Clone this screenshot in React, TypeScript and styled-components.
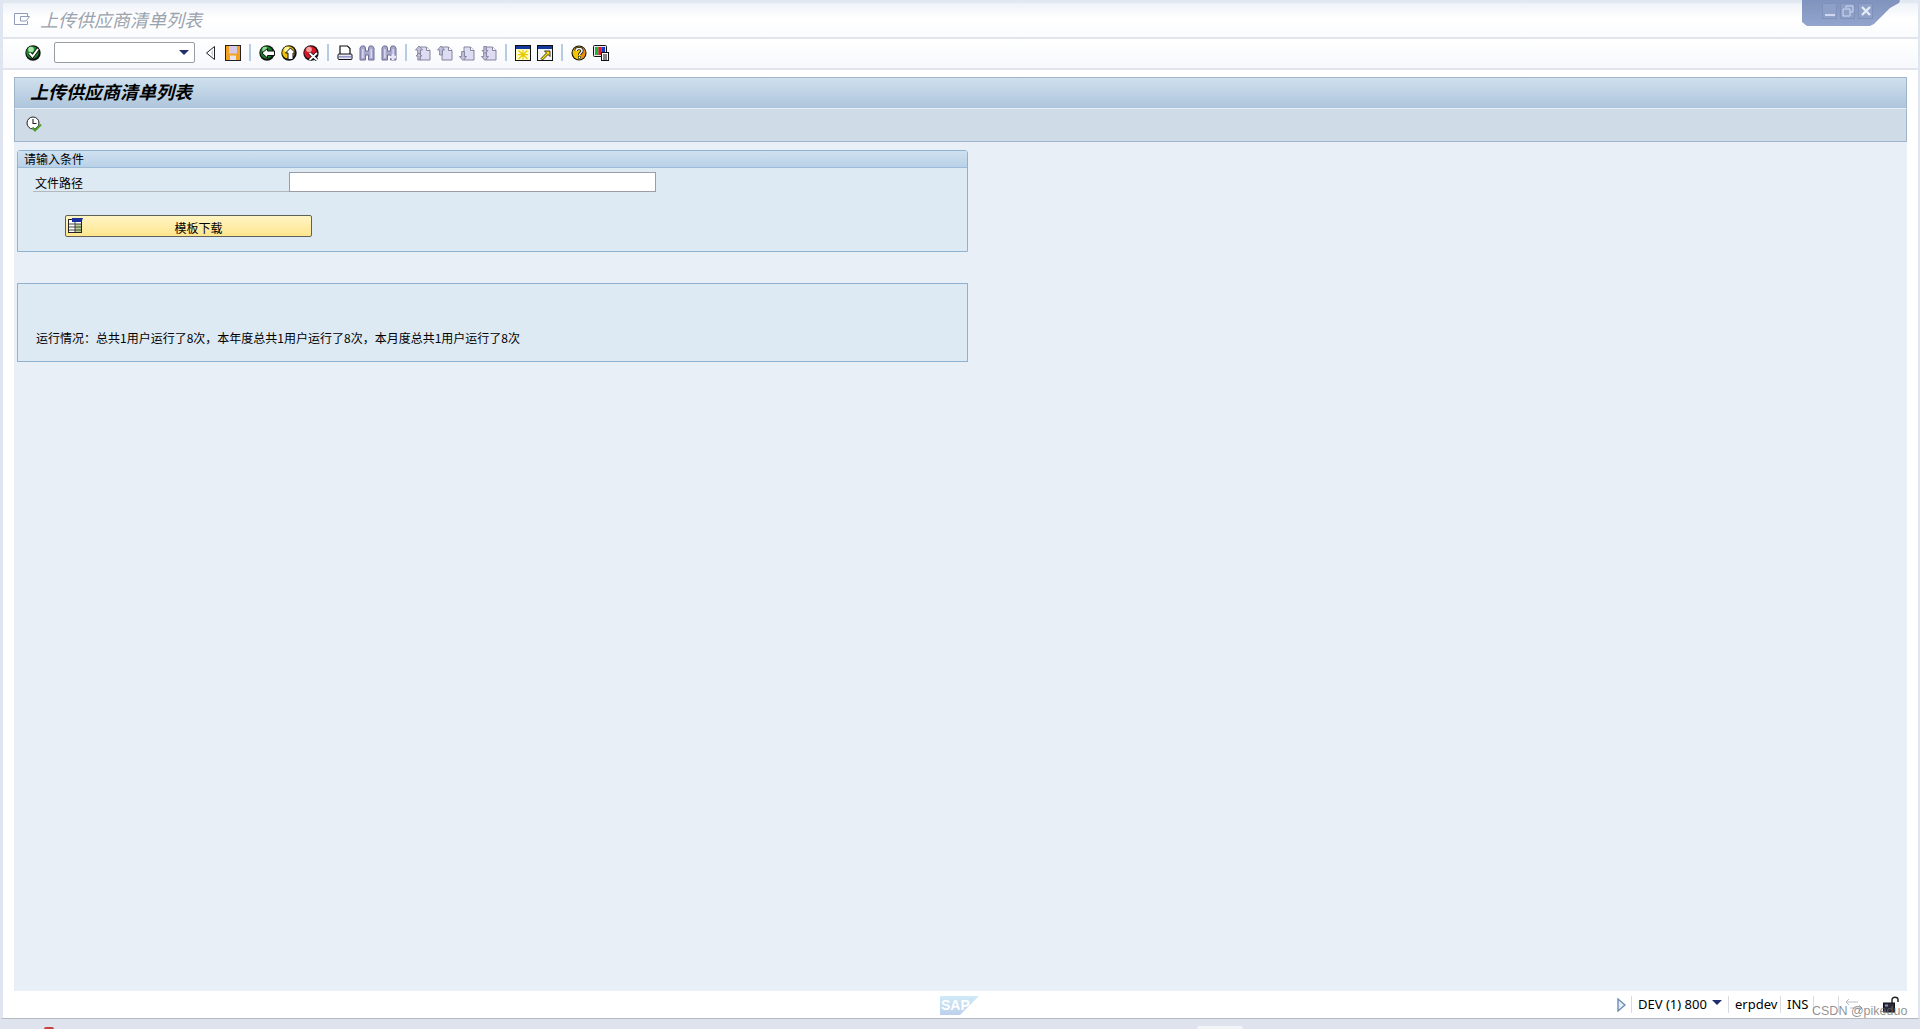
import React from "react";
import styled, { createGlobalStyle } from "styled-components";

const GlobalStyle = createGlobalStyle`
  html, body {
    margin: 0;
    padding: 0;
    height: 100%;
    overflow: hidden;
    background: #ffffff;
    font-family: "Noto Sans CJK SC", "Liberation Sans", sans-serif;
    font-size: 12px;
    color: #000;
  }
`;

// 아이콘
const Svg = styled.svg`
  display: block;
  width: 16px;
  height: 16px;
`;

const Ball: React.FC<{ dark: string; light: string; children?: React.ReactNode }> = ({ dark, light, children }) => (
  <Svg viewBox="0 0 16 16">
    <circle cx="8" cy="8" r="7.7" fill="#111" />
    <circle cx="7.5" cy="7.5" r="6.2" fill={dark} />
    <circle cx="6" cy="4.5" r="2.8" fill={light} />
    {children}
  </Svg>
);

const CheckIcon = () => (
  <Ball dark="#1d8a2e" light="#a8e6a8">
    <path d="M4.5 8 L7.5 11.5 L13 4" fill="none" stroke="#111" strokeWidth="3.6" />
    <path d="M4.5 8 L7.5 11.5 L13 4" fill="none" stroke="#fff" strokeWidth="2" />
  </Ball>
);
const BackIcon = () => (
  <Ball dark="#157a28" light="#8fdc8f">
    <path d="M3 8 L8.5 3.5 V6 H15.5 V10.5 H8.5 V13 Z" fill="#fff" stroke="#111" strokeWidth="1" />
  </Ball>
);
const UpIcon = () => (
  <Ball dark="#f2c200" light="#fff6a0">
    <path d="M9.5 3 L14.5 8 H12 V14.5 H7 V8 H4.5 Z" fill="#fff" stroke="#111" strokeWidth="1" />
  </Ball>
);
const CancelIcon = () => (
  <Ball dark="#d8182a" light="#f7a0a0">
    <path d="M6.5 8 L14 15 M14 8 L6.5 15" stroke="#111" strokeWidth="3.4" />
    <path d="M6.5 8 L14 15 M14 8 L6.5 15" stroke="#fff" strokeWidth="1.8" />
  </Ball>
);
const TriangleIcon = () => (
  <Svg viewBox="0 0 16 16">
    <path d="M11.5 1.5 V14.5 L3.5 8 Z" fill="#fff" stroke="#222" strokeWidth="1" />
    <path d="M10 4 V12 L8 8 Z" fill="#c8d0dc" />
  </Svg>
);
const SaveIcon = () => (
  <Svg viewBox="0 0 16 16">
    <rect x="0.5" y="0.5" width="15" height="15" fill="#f2a21e" stroke="#222" />
    <rect x="4" y="1" width="8" height="7.5" fill="#d8c8e8" />
    <rect x="5" y="10.5" width="6" height="4.5" fill="#e8e4ec" />
  </Svg>
);
const PrintIcon = () => (
  <Svg viewBox="0 0 16 16">
    <path d="M3 9 V1 H10.5 L13 3.5 V9" fill="#fff" stroke="#111" strokeWidth="1.2" />
    <rect x="1" y="9" width="14" height="5.5" rx="1" fill="#e8e8f8" stroke="#111" />
    <rect x="2" y="11" width="12" height="1.6" fill="#9898c8" />
  </Svg>
);
const FindIcon: React.FC<{ plus?: boolean }> = ({ plus }) => (
  <Svg viewBox="0 0 16 16">
    <path d="M1 15 V3 L2.5 1 H5.5 L6.5 3 V6 H9.5 V3 L10.5 1 H13.5 L15 3 V15 H9.5 V10 H6.5 V15 Z" fill="#a8a8cc" stroke="#6f6f96" />
    <rect x="3" y="4" width="1.6" height="9" fill="#d8d8ec" />
    <rect x="11.4" y="4" width="1.6" height="9" fill="#d8d8ec" />
    {plus && <path d="M12 9 V15 M9 12 H15" stroke="#e6e6f4" strokeWidth="2.4" />}
  </Svg>
);
const PageIcon: React.FC<{ kind: "first" | "prev" | "next" | "last" }> = ({ kind }) => (
  <Svg viewBox="0 0 16 16">
    <path d="M5 2 H11.5 L15 5.5 V15 H5 Z" fill="#dcdcf2" stroke="#85859f" />
    <path d="M11.5 2 V5.5 H15" fill="#fff" stroke="#85859f" />
    {(kind === "first" || kind === "prev") && <path d="M4 1 L7.5 5 H5.4 V10 H2.6 V5 H0.5 Z" fill="#c2c2dc" stroke="#777792" strokeWidth="0.8" />}
    {(kind === "next" || kind === "last") && <path d="M4 15.5 L7.5 11.5 H5.4 V6.5 H2.6 V11.5 H0.5 Z" fill="#c2c2dc" stroke="#777792" strokeWidth="0.8" />}
    {kind === "first" && <path d="M4 8 L7 11 H5.2 V15 H2.8 V11 H1 Z" fill="#c2c2dc" stroke="#777792" strokeWidth="0.8" />}
    {kind === "last" && <path d="M4 8.5 L7 5.5 H5.2 V1.5 H2.8 V5.5 H1 Z" fill="#c2c2dc" stroke="#777792" strokeWidth="0.8" />}
  </Svg>
);
const SessionIcon = () => (
  <Svg viewBox="0 0 16 16">
    <rect x="0.5" y="0.5" width="15" height="15" fill="#ffffc8" stroke="#111" />
    <rect x="1" y="1" width="14" height="3" fill="#14389c" />
    <path d="M8 5 V14.5 M3.5 5.5 L12.5 14 M12.5 5.5 L3.5 14 M3 9.7 H13" stroke="#e8c800" strokeWidth="1.2" />
  </Svg>
);
const ShortcutIcon = () => (
  <Svg viewBox="0 0 16 16">
    <rect x="0.5" y="0.5" width="15" height="15" fill="#f4f4f4" stroke="#111" />
    <rect x="1" y="1" width="14" height="3" fill="#14389c" />
    <path d="M4 13.5 L9.5 8 L7.5 6 H13 V11.5 L11 9.5 L5.5 15 Z" fill="#f7e000" stroke="#111" strokeWidth="0.8" />
  </Svg>
);
const HelpIcon = () => (
  <Svg viewBox="0 0 16 16">
    <circle cx="8" cy="8" r="7.5" fill="#111" />
    <circle cx="8" cy="8" r="6.4" fill="#f6c500" />
    <path d="M10 2 A6.4 6.4 0 0 1 10 14 Z" fill="#f08c10" />
    <path d="M5 6 C5 2.6 11 2.6 11 6 C11 8 8.5 8 8.5 10" fill="none" stroke="#111" strokeWidth="3" />
    <path d="M5 6 C5 2.6 11 2.6 11 6 C11 8 8.5 8 8.5 10" fill="none" stroke="#fff" strokeWidth="1.5" />
    <rect x="7.4" y="11.2" width="2.2" height="2.4" fill="#fff" stroke="#111" strokeWidth="0.6" />
  </Svg>
);
const LayoutIcon = () => (
  <Svg viewBox="0 0 16 16">
    <rect x="0.5" y="0.5" width="13" height="11" rx="1" fill="#e8e8e8" stroke="#111" />
    <rect x="2" y="2" width="3.4" height="8" fill="#18b838" />
    <rect x="5.4" y="2" width="3.2" height="8" fill="#d81828" />
    <rect x="8.6" y="2" width="3.4" height="8" fill="#1838c8" />
    <rect x="8.5" y="7.5" width="7" height="8" fill="#fff" stroke="#111" />
    <path d="M10 10 H14 M10 12 H14 M10 14 H14" stroke="#111" strokeWidth="1" />
  </Svg>
);
const ExecuteIcon = () => (
  <Svg viewBox="0 0 16 16">
    <circle cx="7" cy="7" r="6" fill="#fff" stroke="#222" />
    <path d="M7 3 V7.5 H10.5" fill="none" stroke="#222" strokeWidth="1.1" />
    <path d="M6.5 11.5 L9 14.5 L15 8.5" fill="none" stroke="#4f9a2e" strokeWidth="2" />
  </Svg>
);
const TitleIcon = () => (
  <svg width="16" height="12" viewBox="0 0 16 12">
    <path d="M13.5 3 V0.5 H0.5 V11.5 H13.5 V8" fill="none" stroke="#8e9cb8" />
    <path d="M6.5 3.5 H15.5 L12 8 H6.5 Z" fill="#fff" stroke="#8e9cb8" />
  </svg>
);
const TemplateIcon = () => (
  <svg width="16" height="16" viewBox="0 0 16 16" style={{ display: "block" }}>
    <rect x="1.5" y="2.5" width="13" height="13" fill="#fff" stroke="#222" />
    <rect x="8" y="7" width="6" height="8" fill="#b8d090" />
    <path d="M1.5 7 H14 M1.5 10 H14 M1.5 13 H14 M8 3 V15" stroke="#333" strokeWidth="0.9" />
    <path d="M5 1 H16 L14.5 5 H5 Z" fill="#1a2fa0" />
  </svg>
);
const LockIcon = () => (
  <svg width="17" height="17" viewBox="0 0 17 17">
    <path d="M9 7 V3.5 C9 0.5 15 0.5 15 3.5 V6" fill="none" stroke="#222" strokeWidth="1.4" />
    <rect x="0.5" y="7" width="11" height="9" fill="#2a2a3a" stroke="#111" />
    <rect x="2" y="8.5" width="3" height="2" fill="#8890b8" />
  </svg>
);
const StatusPlayIcon = () => (
  <svg width="9" height="14" viewBox="0 0 9 14">
    <path d="M1 1 L8 7 L1 13 Z" fill="#e6eef8" stroke="#6c8cb4" strokeWidth="1.4" />
  </svg>
);
const ShortcutArrows = () => (
  <svg width="18" height="14" viewBox="0 0 18 14">
    <path d="M1 4 H13 M4 1 L1 4 L4 7 M17 10 H5 M14 7 L17 10 L14 13" fill="none" stroke="#b8bcc4" strokeWidth="1" />
  </svg>
);
const SapLogo = () => (
  <svg width="39" height="19" viewBox="0 0 39 19">
    <defs>
      <linearGradient id="sapGrad" x1="0" y1="0" x2="0" y2="1">
        <stop offset="0" stopColor="#cfeaf8" />
        <stop offset="1" stopColor="#bcd0ec" />
      </linearGradient>
    </defs>
    <path d="M0 0 H39 L20 19 H0 Z" fill="url(#sapGrad)" />
    <text x="1" y="14" fontFamily="Liberation Sans" fontWeight="700" fontSize="14" fill="#fff">SAP</text>
  </svg>
);

// 툴바 아이콘 그룹
const toolGroups: React.ReactNode[][] = [
  [<BackIcon key="back" />, <UpIcon key="up" />, <CancelIcon key="cancel" />],
  [<PrintIcon key="print" />, <FindIcon key="find" />, <FindIcon key="findNext" plus />],
  [<PageIcon key="first" kind="first" />, <PageIcon key="prev" kind="prev" />, <PageIcon key="next" kind="next" />, <PageIcon key="last" kind="last" />],
  [<SessionIcon key="session" />, <ShortcutIcon key="shortcut" />],
  [<HelpIcon key="help" />, <LayoutIcon key="layout" />],
];

const App: React.FC = () => (
  <Page>
    <GlobalStyle />
    <Window>
      <TitleBar>
        <TitleIcon />
        <WindowTitle>上传供应商清单列表</WindowTitle>
      </TitleBar>
      <WindowControls>
        <ControlButton>
          <svg width="12" height="12" viewBox="0 0 12 12"><rect x="1" y="9" width="10" height="2" fill="#cfd8ee" /></svg>
        </ControlButton>
        <ControlButton>
          <svg width="12" height="12" viewBox="0 0 12 12"><path d="M4 3 V1 H11 V7 H8 M1 4 H8 V11 H1 Z" fill="none" stroke="#cfd8ee" /></svg>
        </ControlButton>
        <ControlButton>
          <svg width="12" height="12" viewBox="0 0 12 12"><path d="M2 2 L10 10 M10 2 L2 10" stroke="#e4eaf6" strokeWidth="2.4" /></svg>
        </ControlButton>
      </WindowControls>

      <Toolbar>
        <ToolSlot><CheckIcon /></ToolSlot>
        <CommandField>
          <ComboArrow />
        </CommandField>
        <TriangleSlot><TriangleIcon /></TriangleSlot>
        <SaveSlot><SaveIcon /></SaveSlot>
        {toolGroups.map((group, i) => (
          <React.Fragment key={i}>
            <ToolSeparator />
            {group.map((icon, j) => (
              <ToolSlot key={j}>{icon}</ToolSlot>
            ))}
          </React.Fragment>
        ))}
      </Toolbar>

      <Main>
        <Screen>
          <ScreenHeader>
            <ScreenTitle>上传供应商清单列表</ScreenTitle>
          </ScreenHeader>
          <AppToolbar>
            <ExecuteIcon />
          </AppToolbar>
          <Content>
            <GroupBox>
              <GroupTitle>请输入条件</GroupTitle>
              <FieldRow>
                <FieldLabel>文件路径</FieldLabel>
                <PathInput />
              </FieldRow>
              <TemplateButton>
                <ButtonIcon><TemplateIcon /></ButtonIcon>
                模板下载
              </TemplateButton>
            </GroupBox>
            <InfoBox>运行情况：总共1用户运行了8次，本年度总共1用户运行了8次，本月度总共1用户运行了8次</InfoBox>
          </Content>
        </Screen>
      </Main>

      <StatusBar>
        <LogoArea><SapLogo /></LogoArea>
        <StatusItems>
          <StatusPlayIcon />
          <StatusCell $width={97}>
            DEV (1) 800
            <StatusArrow />
          </StatusCell>
          <StatusCell $width={52}>erpdev</StatusCell>
          <StatusCell $width={33}>INS</StatusCell>
          <StatusCell $width={25} />
          <StatusCell $width={45}><ShortcutArrows /></StatusCell>
          <LockIcon />
        </StatusItems>
        <Watermark>CSDN @pikeduo</Watermark>
      </StatusBar>
    </Window>
    <TaskStrip>
      <TaskRed />
      <TaskTab />
    </TaskStrip>
  </Page>
);

// 스타일 컴포넌트
const Page = styled.div`
  width: 1920px;
  height: 1029px;
  display: flex;
  flex-direction: column;
  overflow: hidden;
`;

const Window = styled.div`
  position: relative;
  flex: 1;
  min-height: 0;
  display: flex;
  flex-direction: column;
  border-left: 3px solid #dfe6f1;
  border-right: 2px solid #dfe6f1;
  border-bottom: 1px solid #b4bac2;
  box-sizing: border-box;
  background: #ffffff;
`;

const TitleBar = styled.div`
  height: 39px;
  flex: none;
  box-sizing: border-box;
  display: flex;
  align-items: center;
  gap: 10px;
  padding: 0 0 3px 11px;
  border-top: 3px solid #e2e8f1;
  border-bottom: 2px solid #e0e4ec;
  background: linear-gradient(#eef2f8, #ffffff 45%, #fafbfd);
`;

const WindowTitle = styled.div`
  font-size: 18px;
  line-height: 24px;
  font-style: italic;
  color: #9aa3ae;
`;

const WindowControls = styled.div`
  position: absolute;
  top: 0;
  right: 18px;
  width: 98px;
  height: 26px;
  box-sizing: border-box;
  padding: 3px 0 0 20px;
  display: flex;
  gap: 3px;
  background: linear-gradient(#7f93be, #93a5cd);
  clip-path: polygon(0 0, 98px 0, 97px 3px, 88px 8px, 80px 16px, 72px 24px, 68px 26px, 5px 26px, 0 22px);
`;

const ControlButton = styled.div`
  width: 15px;
  height: 16px;
  display: flex;
  align-items: center;
  justify-content: center;
  background: #8ea0c8;
  border: 1px solid #7f91b9;
  box-sizing: border-box;
`;

const Toolbar = styled.div`
  height: 31px;
  flex: none;
  box-sizing: border-box;
  display: flex;
  align-items: center;
  padding: 0 0 2px 19px;
  border-bottom: 2px solid #e2e5ec;
  background: linear-gradient(#ffffff, #f6f8fc);
`;

const ToolSlot = styled.div`
  width: 22px;
  height: 22px;
  flex: none;
  display: flex;
  align-items: center;
  justify-content: center;
`;

const CommandField = styled.div`
  position: relative;
  width: 141px;
  height: 21px;
  margin-left: 10px;
  box-sizing: border-box;
  border: 1px solid #9a9da4;
  border-radius: 2px;
  background: #ffffff;
`;

const ComboArrow = styled.span`
  position: absolute;
  right: 5px;
  top: 7px;
  border-left: 5px solid transparent;
  border-right: 5px solid transparent;
  border-top: 5px solid #1f2f70;
`;

const TriangleSlot = styled(ToolSlot)`
  margin-left: 5px;
`;

const SaveSlot = styled(ToolSlot)`
  margin-left: 0;
`;

const ToolSeparator = styled.div`
  width: 12px;
  height: 17px;
  flex: none;
  background: linear-gradient(#b6cce2, #b6cce2) center / 2px 100% no-repeat;
`;

const Main = styled.div`
  flex: 1;
  min-height: 0;
  padding: 7px 11px 0 11px;
  display: flex;
`;

const Screen = styled.div`
  flex: 1;
  display: flex;
  flex-direction: column;
  background: #e8eff7;
`;

const ScreenHeader = styled.div`
  height: 32px;
  flex: none;
  box-sizing: border-box;
  display: flex;
  align-items: center;
  padding: 0 0 5px 15px;
  border: 1px solid #9fb4c9;
  border-bottom: 1px solid #e6eef5;
  background: linear-gradient(#cfe0ee, #aec5dc);
`;

const ScreenTitle = styled.div`
  font-size: 18px;
  line-height: 24px;
  font-style: italic;
  font-weight: 700;
  color: #000;
`;

const AppToolbar = styled.div`
  height: 33px;
  flex: none;
  box-sizing: border-box;
  display: flex;
  align-items: center;
  padding: 0 0 3px 11px;
  border: 1px solid #9fb4c9;
  border-top: none;
  background: #cfdce8;
`;

const Content = styled.div`
  padding: 8px 0 0 3px;
  display: flex;
  flex-direction: column;
  gap: 31px;
  align-items: flex-start;
`;

const GroupBox = styled.div`
  width: 951px;
  height: 102px;
  box-sizing: border-box;
  border: 1px solid #8fb2d0;
  border-radius: 3px 3px 0 0;
  background: #dde9f3;
`;

const GroupTitle = styled.div`
  height: 16px;
  line-height: 16px;
  padding-left: 6px;
  border-bottom: 1px solid #9dbbd6;
  background: linear-gradient(#cfe1f0, #b9d1e7);
`;

const FieldRow = styled.div`
  display: flex;
  align-items: flex-end;
  margin: 4px 0 0 15px;
  height: 20px;
`;

const FieldLabel = styled.div`
  width: 256px;
  height: 20px;
  line-height: 22px;
  box-sizing: border-box;
  padding-left: 2px;
  border-bottom: 1px solid #b4b8bc;
`;

const PathInput = styled.div`
  width: 367px;
  height: 20px;
  box-sizing: border-box;
  border: 1px solid #9a9da4;
  background: #ffffff;
`;

const TemplateButton = styled.div`
  position: relative;
  width: 247px;
  height: 22px;
  margin: 23px 0 0 47px;
  padding: 2px 0 0 20px;
  box-sizing: border-box;
  display: flex;
  align-items: center;
  justify-content: center;
  border: 1px solid #5f6058;
  border-radius: 2px;
  background: linear-gradient(#fff4c4, #ffe68e);
`;

const ButtonIcon = styled.span`
  position: absolute;
  left: 1px;
  top: 1px;
`;

const InfoBox = styled.div`
  width: 951px;
  height: 79px;
  box-sizing: border-box;
  padding: 45px 0 0 18px;
  line-height: 17px;
  border: 1px solid #8fb2d0;
  background: #dde9f3;
`;

const StatusBar = styled.div`
  position: relative;
  height: 27px;
  flex: none;
  display: flex;
  align-items: center;
  background: #ffffff;
  font-family: "Noto Sans", "Liberation Sans", sans-serif;
  font-size: 13px;
`;

const LogoArea = styled.div`
  position: absolute;
  left: 937px;
  top: 5px;
`;

const StatusItems = styled.div`
  margin-left: auto;
  display: flex;
  align-items: center;
  height: 100%;
  padding-right: 18px;
  & > svg:first-child {
    margin-right: 5px;
  }
`;

const StatusCell = styled.div<{ $width: number }>`
  width: ${props => props.$width}px;
  height: 17px;
  box-sizing: border-box;
  padding-left: 6px;
  display: flex;
  align-items: center;
  gap: 5px;
  line-height: 17px;
  white-space: nowrap;
  border-left: 1px solid #d8dce2;
`;

const StatusArrow = styled.span`
  border-left: 5px solid transparent;
  border-right: 5px solid transparent;
  border-top: 5px solid #1f2f70;
  margin-top: -4px;
`;

const Watermark = styled.div`
  position: absolute;
  left: 1809px;
  top: 13px;
  font-family: "Liberation Sans", sans-serif;
  font-size: 12.5px;
  line-height: 15px;
  color: rgba(110, 110, 110, 0.75);
  white-space: nowrap;
`;

const TaskStrip = styled.div`
  position: relative;
  height: 10px;
  flex: none;
  background: #dfe3ee;
`;

const TaskRed = styled.div`
  position: absolute;
  left: 44px;
  top: 8px;
  width: 10px;
  height: 2px;
  background: #c8453f;
  border-radius: 3px 3px 0 0;
`;

const TaskTab = styled.div`
  position: absolute;
  left: 1197px;
  top: 7px;
  width: 46px;
  height: 3px;
  background: #f2f4f8;
  border-radius: 3px 3px 0 0;
`;

export default App;
